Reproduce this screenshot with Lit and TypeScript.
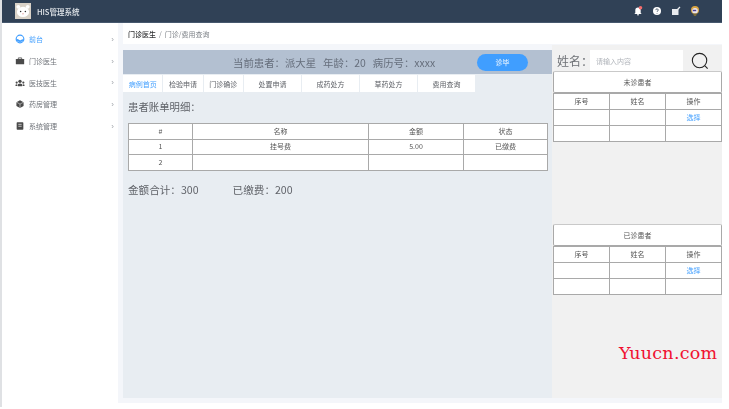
import { LitElement, html, css, svg } from "lit";
import { customElement } from "lit/decorators.js";

const icons: Record<string, unknown> = {
  home: svg`<circle cx="6" cy="6" r="4.600" fill="#fff" stroke="#409eff" stroke-width="1.400"/><path d="M1.500 6.500c2 -1.200 3 1 4.500 1s2.500-2 4.500-1a4.800 4.800 0 0 1-9 0z" fill="#409eff"/>`,
  case: svg`<rect x="1" y="3.500" width="10" height="6.500" rx=".6" fill="#4a4a4a"/><path d="M4 3.500V2.300h4v1.200" fill="none" stroke="#4a4a4a"/>`,
  team: svg`<circle cx="6" cy="4" r="2" fill="#4a4a4a"/><path d="M3.500 10V7.500q2.500-2 5 0V10z" fill="#4a4a4a"/><circle cx="2" cy="5.500" r="1.300" fill="#4a4a4a"/><circle cx="10" cy="5.500" r="1.300" fill="#4a4a4a"/><path d="M.6 9.500V8q1.400-1 2.300 0v1.500zM9.100 9.500V8q1.400-1 2.300 0v1.500z" fill="#4a4a4a"/>`,
  box: svg`<path d="M6 1.500l4.300 2.300v4.600L6 10.700 1.700 8.400V3.800z" fill="#4a4a4a"/><path d="M1.700 3.800L6 6.100l4.300-2.300M6 6.100v4.600" stroke="#fff" stroke-width=".6" fill="none"/>`,
  book: svg`<rect x="2" y="1.500" width="8" height="9" rx=".8" fill="#4a4a4a"/><path d="M4 4h4M4 6.300h4" stroke="#fff" stroke-width=".8"/>`,
};

const menu = [
  { key: "home", label: "前台", active: true },
  { key: "case", label: "门诊医生" },
  { key: "team", label: "医技医生" },
  { key: "box", label: "药房管理" },
  { key: "book", label: "系统管理" },
];
const tabs = ["病例首页", "检验申请", "门诊确诊", "处置申请", "成药处方", "草药处方", "费用查询"];

@customElement("app-root")
export class AppRoot extends LitElement {
  static styles = css`
    :host { display: block; position: relative; width: 729px; height: 409px; overflow: hidden; background: #fff;
      font-family: "Noto Sans CJK SC", "Liberation Sans", sans-serif; font-size: 7px; color: #606266; }
    * { box-sizing: border-box; }
    .app { width: 722px; height: 407px; display: grid; grid-template-columns: 116px 1fr; grid-template-rows: 23px 1fr; border-left: 2px solid #dfe1e4; filter: blur(0.3px); }
    header { grid-column: 1 / 3; background: #304156; border-bottom: 1px solid #46586e; display: flex; align-items: center; padding: 0 22px 0 13px; color: #e4e8ec; }
    .logo { width: 16px; height: 16px; margin-right: 6px; display: block; }
    .brand { font-size: 7.500px; font-weight: 500; }
    .tools { margin-left: auto; display: flex; align-items: center; gap: 9px; }
    .tools svg { width: 10px; height: 10px; display: block; }
    aside { background: #fff; padding-top: 5.500px; display: flex; flex-direction: column; }
    .mi { height: 21.700px; display: flex; align-items: center; padding: 0 4px 0 13px; gap: 4px; color: #6f7379; flex: none; }
    .mi svg { width: 10px; height: 10px; }
    .mi.on { color: #409eff; }
    .mi i { margin-left: auto; font-style: normal; font-size: 8px; color: #a0a4aa; font-family: "Liberation Sans", sans-serif; }
    .content { background: #f4f6fa; display: flex; flex-direction: column; padding-left: 5px; margin-bottom: 4px; }
    .crumb { height: 21px; background: #fff; display: flex; align-items: center; padding-left: 5px; gap: 3px; color: #7d8187; flex: none; }
    .crumb b { color: #303133; font-weight: 500; }
    .work { margin-top: 6px; height: 348px; display: grid; grid-template-columns: 429px 1fr; }
    .left { background: #e8edf2; display: flex; flex-direction: column; }
    .band { height: 24px; background: #b3c0d1; display: flex; align-items: center; font-size: 10.400px; color: #666e7c; padding-left: 110px; white-space: pre; }
    .btn { margin-left: auto; margin-right: 24px; width: 51px; height: 17px; border-radius: 9px; background: #409eff; color: #fff; font-size: 7px; display: flex; align-items: center; justify-content: center; }
    .tabs { display: flex; gap: 1px; margin-top: 1px; }
    .tab { width: 57px; height: 17px; background: #fff; display: flex; align-items: center; justify-content: center; color: #5e6167; }
    .tab.s { width: 39.300px; }
    .tab.on { color: #409eff; }
    .body { padding: 7px 5px; }
    h3 { margin: 0 0 8px; font-weight: 400; font-size: 10.400px; line-height: 16px; color: #606369; }
    table { border-collapse: collapse; table-layout: fixed; background: #fff; width: 100%; }
    td { border: 1px solid #a9a9a9; text-align: center; padding: 0; height: 15.500px; color: #555; line-height: 1; }
    .sum { margin-top: 11px; font-size: 10.600px; color: #606369; display: flex; gap: 34px; }
    .right { background: #f1f1f1; margin-top: -5px; display: flex; flex-direction: column; padding-left: 1px; }
    .search { height: 26px; display: flex; align-items: center; flex: none; padding-top: 5px; font-size: 12px; color: #6f7277; white-space: nowrap; }
    .search span { margin-left: 4px; width: 33px; flex: none; }
    .input { width: 93px; height: 21px; background: #fff; font-size: 7px; color: #b0b4ba; display: flex; align-items: center; padding-left: 6px; flex: none; }
    .search svg { width: 18px; height: 18px; margin-left: 8px; flex: none; }
    .card { height: 22px; background: #fff; border: 1px solid #a9a9a9; border-top-color: #c9c9c9; border-radius: 2px; display: flex; align-items: center; justify-content: center; color: #555; flex: none; }
    .list { flex: none; }
    .list td { height: 16px; }
    .list td.link { color: #409eff; }
    .gap { height: 82px; flex: none; }
    .mark { position: absolute; left: 619px; top: 345px; font-family: "DejaVu Serif", serif; font-size: 17.500px; color: #f01030; line-height: 1; letter-spacing: .25px; }
  `;

  private list(title: string) {
    return html`<div class="card">${title}</div>
      <table class="list"><tbody>
        <tr><td>序号</td><td>姓名</td><td>操作</td></tr>
        <tr><td></td><td></td><td class="link">选择</td></tr>
        <tr><td></td><td></td><td></td></tr>
      </tbody></table>`;
  }

  render() {
    return html`<div class="app">
      <header>
        <svg class="logo" viewBox="0 0 17 17"><rect width="17" height="17" fill="#d9d2c8"/><ellipse cx="8.500" cy="9.500" rx="6.500" ry="5.500" fill="#fff"/><circle cx="3.500" cy="4" r="2" fill="#fff"/><circle cx="13.500" cy="4" r="2" fill="#fff"/><circle cx="6" cy="9" r=".8" fill="#333"/><circle cx="11" cy="9" r=".8" fill="#333"/><path d="M7.500 11.500h2" stroke="#d88" stroke-width=".7"/></svg>
        <span class="brand">HIS管理系统</span>
        <div class="tools">
          <svg viewBox="0 0 10 10"><path d="M5 1.500a2.700 2.700 0 0 1 2.700 2.700V7l1 1H1.300l1-1V4.200A2.700 2.700 0 0 1 5 1.500z" fill="#fff"/><path d="M4 8.800h2" stroke="#fff"/><circle cx="7.500" cy="1.800" r="1.800" fill="#f56c6c"/></svg>
          <svg viewBox="0 0 10 10"><circle cx="5" cy="5" r="4" fill="#fff"/><path d="M3.800 4.100a1.200 1.200 0 1 1 1.600 1.100q-.4.200-.4.700M5 7v.6" stroke="#304156" stroke-width=".8" fill="none"/></svg>
          <svg viewBox="0 0 10 10"><rect x="1" y="3" width="6.500" height="6" fill="#e8ebef"/><path d="M4.500 5.500L9 1" stroke="#e8ebef" stroke-width="1.200"/></svg>
          <svg viewBox="0 0 10 10"><circle cx="5" cy="4" r="4" fill="#d9a441"/><circle cx="5" cy="4.800" r="2.800" fill="#e9e6f2"/><rect x="2.800" y="3.800" width="3.400" height="1.400" fill="#4b3f92"/><path d="M3 7.500h4L6 10H4z" fill="#7a6a3a"/></svg>
        </div>
      </header>
      <aside>
        ${menu.map((m) => html`<div class="mi ${m.active ? "on" : ""}"><svg viewBox="0 0 12 12">${icons[m.key]}</svg>${m.label}<i>›</i></div>`)}
      </aside>
      <div class="content">
        <div class="crumb"><b>门诊医生</b><span>/</span><span>门诊/费用查询</span></div>
        <div class="work">
          <section class="left">
            <div class="band">当前患者：派大星   年龄：20   病历号：xxxx<div class="btn">诊毕</div></div>
            <div class="tabs">
              ${tabs.map((t, i) => html`<div class="tab ${i < 3 ? "s" : ""} ${i === 0 ? "on" : ""}">${t}</div>`)}
            </div>
            <div class="body">
              <h3>患者账单明细：</h3>
              <table>
                <colgroup><col style="width:64px"/><col style="width:176px"/><col style="width:95px"/><col style="width:84px"/></colgroup>
                <tbody>
                  <tr><td>#</td><td>名称</td><td>金额</td><td>状态</td></tr>
                  <tr><td>1</td><td>挂号费</td><td>5.00</td><td>已缴费</td></tr>
                  <tr><td>2</td><td></td><td></td><td></td></tr>
                </tbody>
              </table>
              <div class="sum"><span>金额合计：300</span><span>已缴费：200</span></div>
            </div>
          </section>
          <section class="right">
            <div class="search"><span>姓名：</span><div class="input">请输入内容</div>
              <svg viewBox="0 0 20 20"><circle cx="9.500" cy="9.500" r="8" fill="none" stroke="#222" stroke-width="1.200"/><path d="M15.500 15.500l3 3" stroke="#222" stroke-width="1.200"/></svg></div>
            ${this.list("未诊患者")}
            <div class="gap"></div>
            ${this.list("已诊患者")}
          </section>
        </div>
      </div>
    </div>
    <div class="mark">Yuucn.com</div>`;
  }
}
